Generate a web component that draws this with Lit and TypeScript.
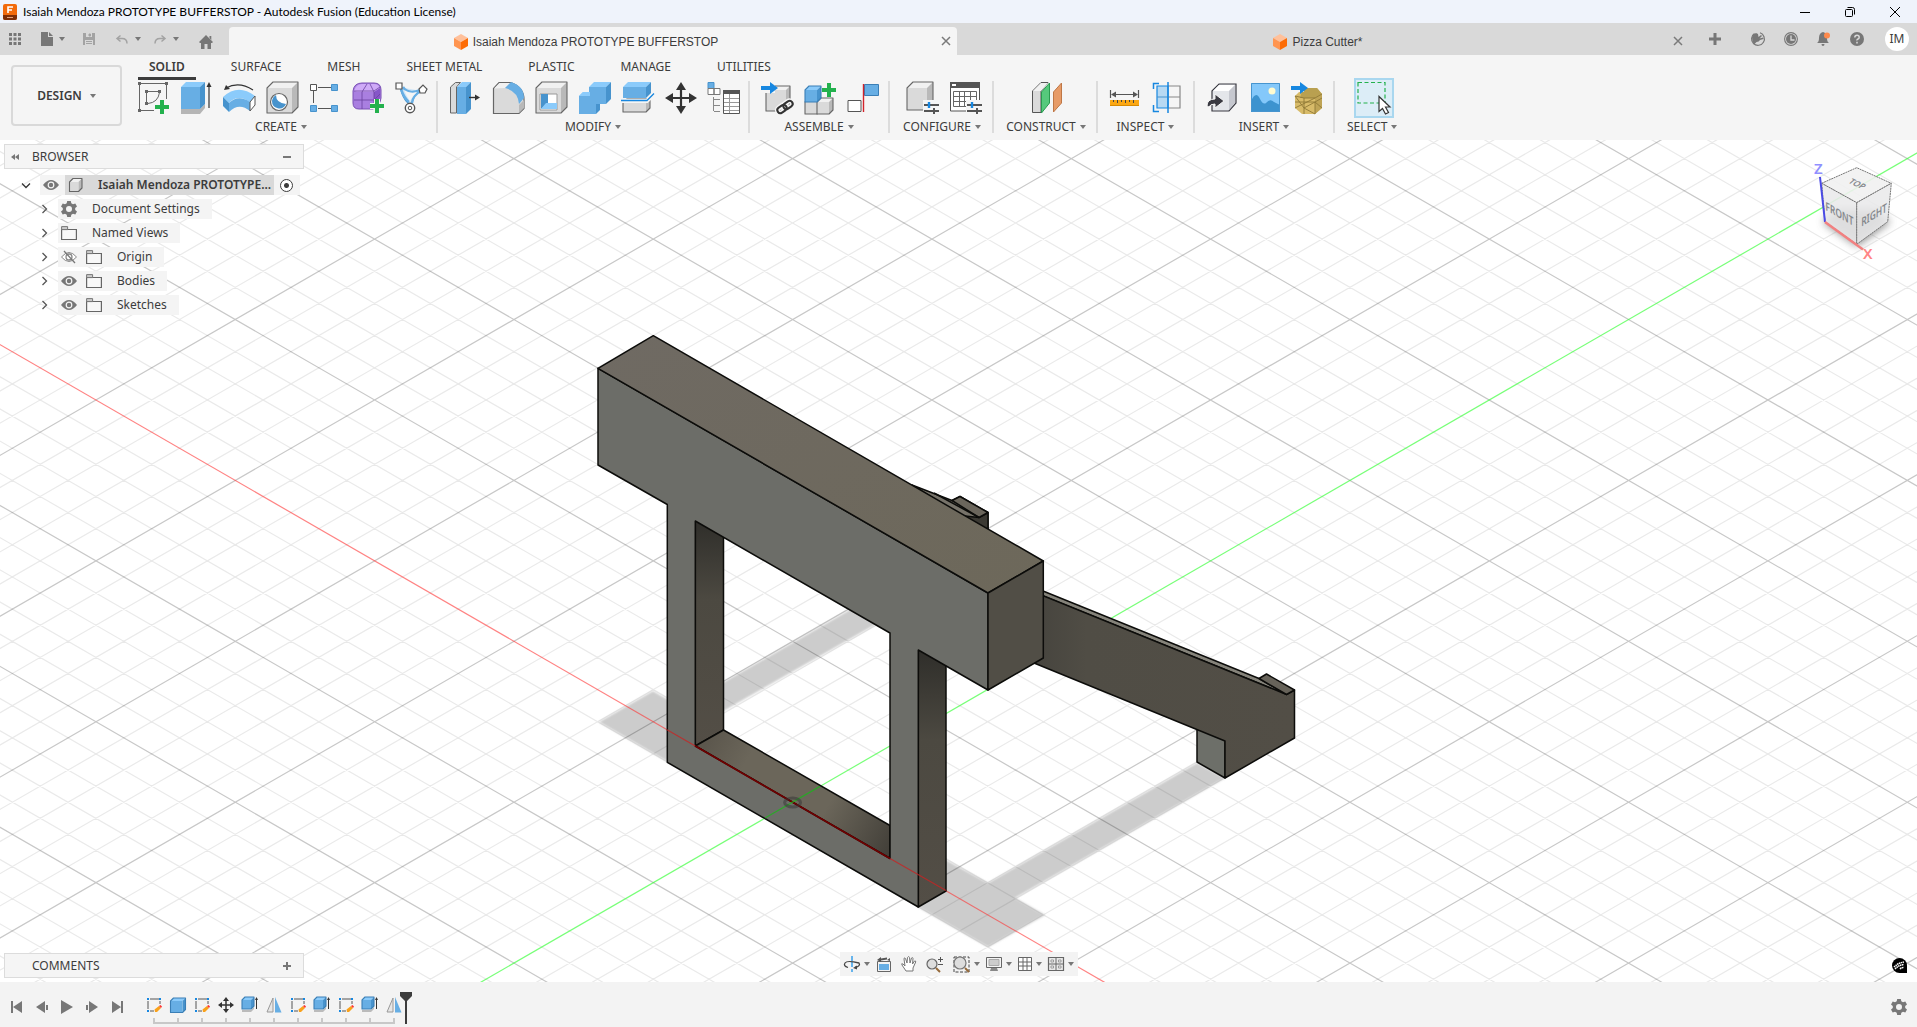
import { LitElement, html, svg, css, nothing } from "lit";
import { customElement, property } from "lit/decorators.js";

type Part = unknown;

/* ---------- shared icon pieces ---------- */

const GREY = ["#dadada", "#f1f1f1", "#b9b9b9", "#666"];
const BLUE = ["#67aee4", "#8bcbfb", "#4793cd", "none"];

/** Oblique box: front face at (x, y) sized w × h, pushed back by d. */
const box = (x: number, y: number, w: number, h: number, d: number, c = GREY): Part => svg`
  <g stroke=${c[3]} stroke-width="1.1" stroke-linejoin="round">
    <path fill=${c[1]} d="M${x} ${y}l${d} ${-d}h${w}l${-d} ${d}z" stroke="none"/>
    <path fill=${c[2]} d="M${x + w} ${y}l${d} ${-d}v${h}l${-d} ${d}z" stroke="none"/>
    <path fill=${c[0]} d="M${x} ${y}h${w}v${h}h${-w}z" stroke="none"/>
    <path fill="none" d="M${x} ${y}l${d} ${-d}h${w}v${h}l${-d} ${d}h${-w}z"/>
  </g>`;

const plus = (x: number, y: number): Part => svg`
  <path d="M${x - 7} ${y}h14M${x} ${y - 7}v14" stroke="#f5f5f5" stroke-width="6"/>
  <path d="M${x - 7} ${y}h14M${x} ${y - 7}v14" stroke="#23b14d" stroke-width="4"/>`;

const arrowRight = (x: number, y: number): Part => svg`
  <path fill="#1787e0" d="M${x} ${y - 2}h9v-4l8 6l-8 6v-4h-9z"/>`;

const sliders = (x: number, y: number): Part => svg`
  <path d="M${x - 1} ${y - 5}h18v15h-18z" fill="#f5f5f5"/>
  <path d="M${x} ${y}h15M${x} ${y + 6}h15" stroke="#555" stroke-width="1.8"/>
  <path d="M${x + 5} ${y - 3}v6" stroke="#1787e0" stroke-width="2.4"/>
  <path d="M${x + 10} ${y + 3}v6" stroke="#555" stroke-width="2"/>`;

const gear = (fill: string): Part => svg`
  <path fill=${fill} fill-rule="evenodd" d="M6.200 0h3.600l.5 2.300 1.700 1 2.300-.8 1.700 3-1.800 1.600v1.800l1.800 1.600-1.700 3-2.300-.8-1.700 1-.5 2.300H6.200l-.5-2.300-1.700-1-2.300.8-1.700-3 1.800-1.600V7.100L0 5.500l1.700-3 2.300.8 1.700-1zM8 5a3 3 0 100 6 3 3 0 000-6z"/>`;

const sketchPencil = svg`
  <path d="M4 2h9M2 4v8M4 14h4M14 4v3" stroke="#555" fill="none"/>
  <path d="M1 1h2v2H1zM13 1h2v2h-2zM1 13h2v2H1z" fill="#1787e0"/>
  <path d="M9 15l-.5-2.500 4.500-3.500 2 2-4 4z" fill="#f9a11b"/><path d="M13 9l1.500-1 1.500 1.500-1 1.500z" fill="#f33"/>`;

const smallExtrude = svg`
  <path d="M1 14h9l3-3v2l-3 3H1z" fill="#bbb"/>
  <g>${box(1, 4, 9, 9, 3, ["#67aee4", "#8bcbfb", "#4793cd", "#3b7fb6"])}</g>
  <path d="M15.500 3v10" stroke="#333"/><path d="M14 4l1.500-3 1.500 3z" fill="#333"/>`;

const ICONS: Record<string, [number, number, Part]> = {
  sketch: [32, 32, svg`
    <path d="M3 1.500h24M1.500 3v24M3 28.500h13M28.500 3v14" stroke="#666" fill="none"/>
    <path d="M0 0h3v3H0zM27 0h3v3h-3zM0 27h3v3H0zM7 8h3v3H7zM20 8h3v3h-3zM7 20h3v3H7z" fill="#666"/>
    <path d="M10 9.500h10M8.500 11v9M10 21.500q10-1 11.500-11" stroke="#666" fill="none"/>${plus(24, 25)}`],
  extrude: [32, 32, svg`
    <path d="M0 27h19l5-5v4l-5 6H0z" fill="#b5b5b5"/>${box(0, 5, 19, 22, 5, BLUE)}
    <path d="M28 4v22" stroke="#333" stroke-width="1.2"/><path d="M25.500 5L28 0l2.500 5z" fill="#333"/>`],
  revolve: [32, 32, svg`
    <path d="M-1 15Q14 1 31 14l-4 7Q14 11 5 21z" fill="#8bcbfb"/>
    <path d="M-1 15l6 6v9l-6-6z" fill="#4793cd"/><path d="M5 21Q14 12 26 20v9Q15 20 5 30z" fill="#67aee4"/>
    <path d="M26 20l5-6v9l-5 6z" fill="#fff" stroke="#555"/>
    <path d="M2 6Q15-1 29 8" stroke="#333" fill="none" stroke-width="1.2"/><path d="M0 8l2-5 4 4z" fill="#333"/>`],
  hole: [32, 32, svg`${box(0, 6, 25, 25, 6)}
    <circle cx="12" cy="20" r="8.5" fill="#fff" stroke="#666" stroke-width="1.2"/>
    <path d="M9 13q0 8 10 9a7.300 7.300 0 01-14-3q.5-4 4-6z" fill="#4793cd"/>`],
  pattern: [32, 32, svg`
    <path d="M8 5.500h13M3.500 9v12M8 26.500h13" stroke="#555"/>
    <path d="M.5 2.500h6v6h-6z" fill="#fff" stroke="#555"/>
    <path d="M21.500 2.500h6v6h-6zM21.500 23.500h6v6h-6zM.5 23.500h6v6h-6z" fill="#67aee4" stroke="#4793cd"/>`],
  form: [32, 32, svg`
    <path d="M0 9Q1 1 9 1h12q7 0 7 7v8q-1 8-8 11H6q-6 0-6-6z" fill="#a97fe0" stroke="#7a50b5"/>
    <path d="M1 9q2-7 8-7h12q5 0 6 5l-6 3H4z" fill="#cfaaf8"/><path d="M21 10l6-4v10l-6 8z" fill="#8656c8"/>
    <path d="M9 27V10l5-8M1 18h20l6-6M21 26V10l-4-8M1 9h20l6-4" stroke="#6b429f" fill="none" stroke-width=".8"/>${plus(24, 24)}`],
  derive: [32, 32, svg`
    <path d="M4 5q3 12 8 16l2 1 2-1q2-9 9-12" stroke="#4793cd" stroke-width="1.2" fill="#cfe6f8"/>
    <path d="M7 5q5 8 17 3M5 7q3 9 8 13M25 9q-8 4-9 12" stroke="#67aee4" stroke-width="2.4" fill="none"/>
    <path d="M8 8q6 4 13 2-5 4-7 9-3-4-6-11z" fill="#f5f5f5"/>
    <path d="M0 1h6v6H0z" fill="#fff" stroke="#555" stroke-width="1.2"/>
    <path d="M23 7l4-4 4 4-2 4h-5z" fill="#fff" stroke="#555" stroke-width="1.2"/>
    <circle cx="14" cy="26" r="4.700" fill="#fff" stroke="#555" stroke-width="1.4"/><circle cx="14" cy="26" r="1.800" fill="#fff" stroke="#555"/>`],
  presspull: [32, 32, svg`
    <path d="M.5 31V5l5-4.500h5L6.500 5v26z" fill="#dadada" stroke="#666"/>
    ${box(7, 5, 9, 27, 5, BLUE)}
    <path d="M19 15.500h7" stroke="#333" stroke-width="1.4"/><path d="M25 12.500l5 3-5 3z" fill="#333"/>`],
  fillet: [32, 32, svg`
    <path d="M.5 31.500V6.500L6 .5h12q13 5 13 17v9l-5 5z" fill="#dadada" stroke="#666" stroke-width="1.2"/>
    <path d="M1 6.500L6.500 1H17l-5 5z" fill="#f1f1f1"/><path d="M26 23l5-5v8l-5 5z" fill="#b9b9b9"/>
    <path d="M12 6l6-6q13 4 13 16l-5 6Q25 9 12 6z" fill="#67aee4"/>`],
  shell: [32, 32, svg`${box(0, 6, 25, 25, 6)}
    <path d="M4 12h17v16H4z" fill="#fff" stroke="#999"/><path d="M5 12h7v9l-7 6z" fill="#4793cd"/><path d="M5 27l5-6h11v6z" fill="#8bcbfb"/>`],
  combine: [32, 32, svg`${box(10, 5, 17, 17, 5, BLUE)}${box(0, 14, 17, 18, 4, BLUE)}
    <path d="M10 10h12v12H10z" fill="#67aee4"/><path d="M0 14l4-4h7v4z" fill="#8bcbfb"/>`],
  split: [32, 32, svg`${box(1, 21, 23, 9, 4)}
    <path d="M0 19h25l7-7" stroke="#f5f5f5" stroke-width="4" fill="none"/>
    ${box(1, 5, 23, 11, 5, BLUE)}<path d="M-1 18.500h26l7-7" stroke="#1787e0" stroke-width="1.3" fill="none"/>`],
  move: [32, 32, svg`
    <path d="M16 4v24M4 16h24" stroke="#333" stroke-width="2.2"/>
    <path d="M11 8l5-8 5 8zM11 24l5 8 5-8zM8 11l-8 5 8 5zM24 11l8 5-8 5z" fill="#333"/>`],
  params: [32, 32, svg`
    <path d="M0 .5h6v6H0z" fill="#67aee4" stroke="#4793cd"/><path d="M0 6.500h6v6H0zM6 6.500h6v6H6z" fill="#fff" stroke="#777"/>
    <path d="M5.500 15v14M6 17.500h6M6 23.500h6M6 29.500h6" stroke="#888" fill="none"/>
    <path d="M15.500 8.500h16v23h-16z" fill="#fff" stroke="#555"/><path d="M15 8h17v4H15z" fill="#555"/>
    <path d="M16 16.500h15M16 20.500h15M16 24.500h15M16 28.500h15M21.500 12v19" stroke="#999"/>`],
  insertLink: [32, 32, svg`${box(4, 8, 20, 21, 4)}
    <path d="M-2 1h15v10H-2z" fill="#f5f5f5"/>${arrowRight(-1, 6)}
    <g fill="none" stroke="#f5f5f5" stroke-width="5"><rect x="15" y="24" width="10" height="6" rx="3" transform="rotate(-35 20 27)"/><rect x="21" y="20" width="10" height="6" rx="3" transform="rotate(-35 26 23)"/></g>
    <g fill="none" stroke="#333" stroke-width="2"><rect x="15" y="24" width="10" height="6" rx="3" transform="rotate(-35 20 27)"/><rect x="21" y="20" width="10" height="6" rx="3" transform="rotate(-35 26 23)"/></g>`],
  newComponent: [32, 32, svg`${box(0, 20, 12, 12, 4)}${box(12, 20, 12, 12, 4)}
    ${box(0, 8, 12, 12, 4, ["#67aee4", "#8bcbfb", "#4793cd", "#3b7fb6"])}${plus(24, 8)}`],
  joint: [32, 32, svg`
    <path d="M0 18.500h13v11H0z" fill="#fff" stroke="#555"/><path d="M16.500 2.500h14v11h-14z" fill="#67aee4" stroke="#3b7fb6"/>
    <path d="M15.500 2v28" stroke="#d2232a" stroke-width="1.4"/>`],
  configure: [32, 32, svg`${box(0, 6, 20, 22, 6)}${sliders(17, 23)}`],
  configTable: [32, 32, svg`
    <path d="M.5 1h29v28H.5z" fill="#fff" stroke="#555"/><path d="M0 0h30v6H0z" fill="#555"/><path d="M2 2h4v2H2z" fill="#fff"/>
    <path d="M3.500 9.500h23v15h-23zM4 14.500h22M4 19.500h22M9.500 10v14M14.500 10v14M20.500 10v14" stroke="#666" fill="none"/>${sliders(17, 23)}`],
  planes: [32, 32, svg`
    <path d="M.5 30.500V9L9 .5h7L9 9v21.500z" fill="#dadada" stroke="#555"/><path d="M1 9L9 1h7L9 9z" fill="#f1f1f1"/>
    <path d="M9.500 31V10l8-9v20z" fill="#56c97c" stroke="#2a9a50"/><path d="M21.500 30V10l8-9v20z" fill="#e79b67" stroke="#bf7746"/>`],
  measure: [32, 32, svg`
    <path d="M.5 8v8M28.500 8v8M3 12.500h23" stroke="#555" stroke-width="1.2"/><path d="M1 12.500l5-3v6zM28 12.500l-5-3v6z" fill="#555"/>
    <path d="M0 18h29v6H0z" fill="#fba713"/><path d="M3.500 18v2M7.500 18v3M11.500 18v2M15.500 18v3M19.500 18v2M23.500 18v3" stroke="#444"/><path d="M0 23h29v1H0z" fill="#d88a00"/>`],
  section: [32, 32, svg`
    <path d="M4 4h11v22H4z" fill="#b7d9f3" stroke="#1787e0" stroke-width="1.2"/><path d="M4 15h11" stroke="#4793cd"/>
    <path d="M15 4h12v22H15M15 15h12" stroke="#888" fill="none" stroke-width="1.2"/>
    <path d="M.5 7V1.500H6M.5 23v6.500H6M15 0v31" stroke="#1787e0" fill="none" stroke-width="1.5"/>`],
  insertBox: [32, 32, svg`
    <path d="M5 9l7-7h17v19l-7 8H5z" fill="#e4e6ea" stroke="#3a3a42" stroke-width="1.2"/>
    <path d="M6 9l6-6h16l-6 6z" fill="#fff"/><path d="M22 9l6-6v18l-6 7z" fill="#c6c8cf"/>
    <path d="M0 24q0-7 8-7v-5l9 7-9 7v-4Q3 22 2 25z" fill="#3a3a42" stroke="#f5f5f5"/>`],
  image: [32, 32, svg`
    <path d="M1 1h29v29H1z" fill="#84c8fa"/><path d="M1 19q5-11 9-2 3 6 6 4 4-5 8-1l6 3v7H1z" fill="#3d93cf"/>
    <circle cx="22" cy="9" r="3.5" fill="#fffbd0"/><path d="M1.500 1.500h28v28h-28z" fill="none" stroke="#4795cf"/>`],
  mesh: [32, 32, svg`
    <path d="M2 14l8-8h14l5 6v14l-7 6H9l-7-6z" fill="#d8bb69"/><path d="M10 6h14l5 6-7 4H7z" fill="#b9a050"/><path d="M29 12v14l-7 6V16z" fill="#bfa456"/>
    <path d="M2 14l9 2h11l7-4M2 20h20l7-4M2 26l20-10M11 16v16M2 14l9 12 11-6v12M11 26l11 6M22 20l7 6" stroke="#8e7836" fill="none" stroke-width=".9"/>
    <path d="M-3 1h14v9H-3z" fill="#f5f5f5"/>${arrowRight(-2, 6)}`],
  select: [32, 32, svg`
    <path d="M0 .5h27v20.500H0z" fill="none" stroke="#23b14d" stroke-width="1.2" stroke-dasharray="4 2.5"/>
    <path d="M21 14.500v15l3.500-3 3 5.500 3-1.500-3-5.500h4.500z" fill="#fff" stroke="#333" stroke-width="1.2"/>`],

  logo: [14, 16, svg`
    <path d="M2 0h10q2 0 2 2v12q0 2-2 2H2q-2 0-2-2V2Q0 0 2 0z" fill="#f26a0b"/><path d="M0 11h14v3q0 2-2 2H2q-2 0-2-2z" fill="#7d2d06"/>
    <path d="M5 9V3h5M5 6h4" stroke="#fff" stroke-width="1.6" fill="none"/><path d="M4 13.500h6" stroke="#e3a07c"/>`],
  cube: [14, 16, svg`<path d="M7 0l7 4-7 4-7-4z" fill="#ffc09a"/><path d="M0 4l7 4v8l-7-4z" fill="#ff9550"/><path d="M14 4L7 8v8l7-4z" fill="#fd6c05"/>`],
  min: [10, 10, svg`<path d="M0 5.500h10" stroke="#000"/>`],
  restore: [10, 10, svg`<rect x=".5" y="2.5" width="7" height="7" rx="1" fill="none" stroke="#000"/><path d="M2.500.5h5q2 0 2 2v5" fill="none" stroke="#000"/>`],
  close: [10, 10, svg`<path d="M0 0l10 10M10 0L0 10" stroke="#000"/>`],
  tabClose: [8, 8, svg`<path d="M0 0l8 8M8 0L0 8" stroke="#7a7a7a" stroke-width="1.5"/>`],
  apps: [12, 12, svg`<path d="M0 0h3v3H0zM4.500 0h3v3h-3zM9 0h3v3H9zM0 4.500h3v3H0zM4.500 4.500h3v3h-3zM9 4.500h3v3H9zM0 9h3v3H0zM4.500 9h3v3h-3zM9 9h3v3H9z" fill="#777"/>`],
  file: [12, 14, svg`<path d="M0 0h7v5h5v9H0zM8 0l4 4H8z" fill="#777"/>`],
  save: [12, 12, svg`<path d="M0 0h12v12H0z" fill="#a3a3a3"/><path d="M3 0h6v4H3zM2 7h8v5H2z" fill="#d9d9d9"/><path d="M6 1h1.500v2H6zM3 8.500h6M3 10.500h6" fill="#a3a3a3" stroke="#a3a3a3"/>`],
  undo: [12, 9, svg`<path d="M4.500.5L1 3.500l3.500 3M1 3.500h5q5 0 5 5" fill="none" stroke="#a3a3a3" stroke-width="1.5"/>`],
  redo: [12, 9, svg`<path d="M7.500.5L11 3.500l-3.500 3M11 3.500H6q-5 0-5 5" fill="none" stroke="#a3a3a3" stroke-width="1.5"/>`],
  home: [14, 14, svg`<path d="M7 0l7 7-1 1h-1v6H8.500V9h-3v5H2V8H1L0 7z" fill="#777"/><path d="M10.500 1h1.800v4l-1.800-2z" fill="#777"/>`],
  add: [12, 12, svg`<path d="M6 0v12M0 6h12" stroke="#777" stroke-width="3"/>`],
  ext: [14, 14, svg`<path d="M9 .8A6.400 6.400 0 113.500 1.500" fill="none" stroke="#777" stroke-width="1.2"/>
    <path d="M1 5q1-3 4-4l2 1 .5 3 2.500-2 1 1-2.500 2.500 3.500-1 .5 1.500-3.500 1q-1 2-3.500 2l-2.500 2.500Q1 10 1 5z" fill="#777"/>`],
  clock: [14, 14, svg`<circle cx="7" cy="7" r="6.400" fill="none" stroke="#777" stroke-width="1.1"/><circle cx="7" cy="7" r="5" fill="#777"/><path d="M7 3.500V8h3.500" stroke="#d9d9d9" fill="none" stroke-width="1.3"/>`],
  bell: [14, 14, svg`<path d="M6 0q4 1 4 6 0 4 2 5H0q2-1 2-5 0-5 4-6zM4.500 12h3q0 2-1.500 2t-1.500-2z" fill="#777"/><circle cx="10" cy="3.5" r="3" fill="#ff8a4c"/>`],
  help: [14, 14, svg`<circle cx="7" cy="7" r="7" fill="#777"/><path d="M4.800 5.500q0-2.300 2.200-2.300t2.200 2q0 1.200-1.200 1.800T7 8.500M7 9.700v1.700" stroke="#d9d9d9" stroke-width="1.5" fill="none"/>`],

  collapse: [8, 6, svg`<path d="M4 0v6L0 3zM8 0v6L4 3z" fill="#777"/>`],
  minus: [8, 2, svg`<path d="M0 0h8v2H0z" fill="#777"/>`],
  plusSmall: [8, 8, svg`<path d="M4 0v8M0 4h8" stroke="#777" stroke-width="2"/>`],
  down: [10, 10, svg`<path d="M1 3.500l4 4 4-4" fill="none" stroke="#333" stroke-width="1.3"/>`],
  right: [10, 10, svg`<path d="M3.500 1l4 4-4 4" fill="none" stroke="#555" stroke-width="1.3"/>`],
  eye: [16, 12, svg`<path d="M0 6Q8-4 16 6 8 16 0 6z" fill="#777"/><circle cx="8" cy="6" r="2.8" fill="none" stroke="#f4f4f4" stroke-width="1.2"/>`],
  eyeOff: [16, 12, svg`<path d="M.5 6Q8-3 15.500 6 8 15 .5 6z" fill="#fff" stroke="#888"/><circle cx="8" cy="6" r="3" fill="none" stroke="#888" stroke-width="1.3"/><path d="M3 0l11 12" stroke="#777" stroke-width="1.3"/>`],
  body: [16, 16, svg`${box(1.5, 5, 9, 9.5, 3.5)}`],
  gear: [16, 16, gear("#777")],
  folder: [16, 14, svg`<path d="M.6 3.500h14.800v10H.6z" fill="#f8f8f8" stroke="#666" stroke-width="1.2"/><path d="M.6.6h6v3h-6z" fill="#ccc" stroke="#777"/>`],

  orbit: [16, 16, svg`<path d="M8 0v5M8 6v5M8 13v3" stroke="#67b4ec" stroke-width="2"/><path d="M4 11.500Q-1 10 1 7t14 0q2 3-4 4.500" fill="none" stroke="#444" stroke-width="1.3"/><path d="M9 12l4-2.500v4z" fill="#444"/>`],
  lookAt: [16, 16, svg`<path d="M1.500 5.500h13v10h-13z" fill="#f3f3f3" stroke="#666"/><path d="M3 8h10v6H3z" fill="#67aee4"/><path d="M1 4l4-3v1.500l6-1v2l-6 1V6M11 4l3-2v3" fill="#555"/>`],
  pan: [16, 16, svg`<path d="M5 15L1 9q-1-2 1-1l2 2L3 3q0-2 1.500-.5L6 7 6.500 1.500Q8-.5 8.500 1.500L9 7l1.500-5q1.500-1 1.500.5L11.500 8l2-3q1.500-.5 1.200 1L12 12v3z" fill="#fff" stroke="#777"/>`],
  zoom: [18, 16, svg`<circle cx="6" cy="8" r="5" fill="#ddd" stroke="#666" stroke-width="1.2"/><path d="M10 12l4 4" stroke="#95693a" stroke-width="2"/><path d="M12 3.500h5M14.500 1v5M12 8.500h5" stroke="#555"/>`],
  fit: [17, 17, svg`<path d="M1 1h15v15H1z" fill="none" stroke="#444" stroke-dasharray="3 1.5"/><circle cx="7" cy="7" r="6" fill="#ddd" stroke="#777" stroke-width="1.2"/><path d="M12 12l4 4" stroke="#95693a" stroke-width="2"/>`],
  display: [16, 14, svg`<path d="M.5.5h15v10H.5z" fill="#f3f3f3" stroke="#666"/><path d="M3 2.500h10v6H3z" fill="#ccc" stroke="#aaa"/><path d="M5 11h6l1 3H4z" fill="#888"/>`],
  grid: [14, 14, svg`<path d="M.5.5h13v13H.5zM5 1v12M9 1v12M1 5h12M1 9h12" fill="#fff" stroke="#666"/>`],
  views: [16, 14, svg`<path d="M.5.5h15v13H.5z" fill="#e8e8e8" stroke="#666" stroke-width="1.2"/><path d="M8 0v14M0 7h16" stroke="#666"/><path d="M3 3h2.500v2H3zM10.500 3H13v2h-2.500zM3 9h2.500v2H3zM10.500 9H13v2h-2.500z" fill="#fff" stroke="#999"/>`],

  start: [12, 12, svg`<path d="M0 0h2v12H0zM11 0v12L2 6z" fill="#777"/>`],
  back: [12, 12, svg`<path d="M9 0v12L0 6zM10 4h2v5h-2z" fill="#777"/>`],
  play: [12, 14, svg`<path d="M0 0l12 7-12 7z" fill="#777"/>`],
  next: [12, 12, svg`<path d="M3 0v12l9-6zM0 4h2v5H0z" fill="#777"/>`],
  end: [12, 12, svg`<path d="M10 0h2v12h-2zM1 0v12l9-6z" fill="#777"/>`],
  tSketch: [16, 16, sketchPencil],
  tExtrude: [18, 17, smallExtrude],
  tBox: [16, 16, svg`${box(0.5, 4, 12, 11.5, 3, ["#67aee4", "#8bcbfb", "#4793cd", "#3b7fb6"])}`],
  tMove: [16, 16, svg`<path d="M8 2v12M2 8h12" stroke="#333" stroke-width="1.5"/><path d="M5 4l3-4 3 4zM5 12l3 4 3-4zM4 5L0 8l4 3zM12 5l4 3-4 3z" fill="#333"/>`],
  tMirror: [16, 16, svg`<path d="M7 1v14H1z" fill="#e6e6e6" stroke="#999"/><path d="M9 0l6.500 15.500H9z" fill="#67aee4"/>`],
  marker: [12, 32, svg`<path d="M0 0h12v4L7 9v23H5V9L0 4z" fill="#3c3c3c"/>`],
  badge: [15, 15, svg`<path d="M7.500 0A7.500 7.500 0 0115 7.500V15H7.500a7.500 7.500 0 010-15z" fill="#000"/><path d="M2 9q4-4 10-5M3 11q4-4 9-4.500M8 11q2-2 4-1.500" stroke="#fff" stroke-width="1.5" fill="none" stroke-dasharray="1.500 .5"/>`],
};

@customElement("fusion-icon")
class FusionIcon extends LitElement {
  @property() name = "";
  static styles = css`
    :host { display: inline-flex; flex: none; }
    svg { display: block; overflow: visible; }
  `;
  render() {
    const icon = ICONS[this.name];
    if (!icon) return nothing;
    const [w, h, body] = icon;
    return html`<svg width=${w} height=${h} viewBox="0 0 ${w} ${h}" aria-hidden="true">${body}</svg>`;
  }
}

/* ---------- modelling canvas ---------- */

const OX = 792.6, OY = 802.2, SLOPE = 0.57735, STEP = 32.178;

@customElement("fusion-canvas")
class FusionCanvas extends LitElement {
  static styles = css`
    :host { display: block; }
    .scene { display: block; width: 100%; height: 100%; }
    .label { font-family: "Noto Sans", sans-serif; }
  `;

  private gridPath(major: boolean) {
    let d = "";
    for (const s of [SLOPE, -SLOPE]) {
      for (let k = -50; k <= 50; k++) {
        if ((k % 5 === 0) !== major || k === 0) continue;
        const c = OY + k * STEP;
        d += `M-100 ${(c + s * (-100 - OX)).toFixed(1)}L2020 ${(c + s * (2020 - OX)).toFixed(1)}`;
      }
    }
    return d;
  }

  render() {
    return html`<svg class="scene" viewBox="0 140 1917 842" preserveAspectRatio="xMidYMid slice" role="img" aria-label="Buffer stop model">
      <defs>
        <linearGradient id="top" x1="0" y1="0" x2="1" y2="1"><stop offset="0" stop-color="#6f6a63"/><stop offset="1" stop-color="#6d685a"/></linearGradient>
        <linearGradient id="leg" x1="0" y1="0" x2="0" y2="1"><stop offset="0" stop-color="#2f2e2a"/><stop offset=".35" stop-color="#4c4941"/><stop offset="1" stop-color="#534e46"/></linearGradient>
        <linearGradient id="sill" gradientUnits="userSpaceOnUse" x1="709" y1="738" x2="900" y2="848"><stop offset="0" stop-color="#5c574d"/><stop offset=".2" stop-color="#6b665a"/><stop offset=".62" stop-color="#6b665a"/><stop offset="1" stop-color="#3f3c36"/></linearGradient>
        <linearGradient id="arm" x1="0" x2="1" y1="0" y2="0"><stop offset="0" stop-color="#46443e"/><stop offset=".2" stop-color="#504d45"/><stop offset="1" stop-color="#524e46"/></linearGradient>
        <filter id="soft" x="-5%" y="-5%" width="110%" height="110%"><feGaussianBlur stdDeviation="1"/></filter>
        <filter id="cubeShade" x="-30%" y="-30%" width="160%" height="160%"><feGaussianBlur stdDeviation="4"/></filter>
      </defs>
      <rect x="-100" y="40" width="2120" height="1042" fill="#fff"/>
      <g fill="#ccc" filter="url(#soft)">
        <path d="M599 722L653 691L720 730V792z"/>
        <path d="M670 713L900 581L915 602L690 730z"/>
        <path d="M900 835L988 883L1197 763L1225 778L1015 898L1045 915L988 947L918 907z"/>
      </g>
      <path d=${this.gridPath(false)} stroke="#000" stroke-opacity=".085" fill="none" stroke-width="1.2"/>
      <path d=${this.gridPath(true)} stroke="#000" stroke-opacity=".22" fill="none" stroke-width="1.2"/>
      <path d=${`M-100 ${OY + SLOPE * (-100 - OX)}L2020 ${OY + SLOPE * (2020 - OX)}`} stroke="#ff3030" stroke-opacity=".6" stroke-width="1.2"/>
      <path d=${`M-100 ${OY - SLOPE * (-100 - OX)}L2020 ${OY - SLOPE * (2020 - OX)}`} stroke="#30ff30" stroke-opacity=".65" stroke-width="1.2"/>

      <g stroke="#0c0c0a" stroke-width="1.5" stroke-linejoin="round">
        <path d="M912 485L952 500.500L960 496.500L988 512.500V532z" fill="#77736a"/>
        <path d="M979 517.500L988 512.500V532L965 516z" fill="#3b3933"/>
        <path d="M952 500.500L979 517.500L988 512.500L960 496.500z" fill="#6b665c"/>
        <path d="M934 493L979 517.500" fill="none"/>

        <path d="M1197 728V762L1225 778V740z" fill="#6d6f69"/>
        <path d="M1040 590L1043 591L1259 678.500L1286.500 694.500L1043 596z" fill="#85837a"/>
        <path d="M1034 592L1286.500 694.500L1294.500 690V738L1225 778V741L1034 663z" fill="url(#arm)"/>
        <path d="M1259 678.500L1266.500 674L1294.500 690L1286.500 694.500z" fill="#67635a"/>

        <path d="M695.300 520L723.500 530V730L695.300 746z" fill="url(#leg)"/>
        <path d="M918.300 650L946 660V891L918.300 907z" fill="url(#leg)"/>
        <path d="M695.300 746L723.500 730L890 825.500V858.500z" fill="url(#sill)"/>
        <path d="M598 368.300L988 593V690L918.300 650V907L667.300 762.300V504.500L598 465zM695.300 521V746L890 858.500V633z" fill="#6c6d68" fill-rule="evenodd"/>
        <path d="M598 368.300L653.300 335.700L1043.300 561L988 593z" fill="url(#top)"/>
        <path d="M988 593L1043.300 561V658L988 690z" fill="#514e46"/>
      </g>
      <path d="M667 729.800L695.300 746M890 858.500L946 890.500" stroke="#c22" stroke-opacity=".75" stroke-width="1.3"/>
      <path d="M695.300 746L890 858.500" stroke="#700000" stroke-width="1.8"/>
      <path d="M765 818L820 786.400" stroke="#1db31d" stroke-opacity=".8" stroke-width="1.3"/>
      <ellipse cx="792.6" cy="802.5" rx="8" ry="4.5" fill="none" stroke="#333" stroke-opacity=".5" stroke-width="3"/>

      <g>
        <path d="M1823 222L1857 246L1890 222L1876 210L1836 210z" fill="#666" opacity=".75" filter="url(#cubeShade)"/>
        <g stroke="#777" stroke-dasharray="2 .6" fill-opacity=".88">
          <path d="M1821.700 183.300L1856.700 167.700L1891.300 183.300L1856.700 202.700z" fill="#f0f0f0"/>
          <path d="M1821.700 183.300L1856.700 202.700V244.300L1825 221.700z" fill="#e9e9ea"/>
          <path d="M1856.700 202.700L1891.300 183.300L1887.700 221.700L1856.700 244.300z" fill="#e9e9ea"/>
        </g>
        <path d="M1820 177L1825 222" stroke="#4a4ae6" stroke-width="2"/>
        <path d="M1825 222L1863 249.500" stroke="#f28080" stroke-width="2.5"/>
        <g class="label" font-size="12" font-weight="600" fill="#85888d" text-anchor="middle">
          <text transform="matrix(.7 .4 .02 1 1839.500 218)">FRONT</text>
          <text transform="matrix(.7 -.42 -.02 1 1874 219)">RIGHT</text>
          <text transform="matrix(.62 .3 -.55 .5 1855 186)">TOP</text>
        </g>
        <text class="label" x="1814" y="174" font-size="15" font-weight="600" fill="#9090ff">Z</text>
        <text class="label" x="1863" y="259" font-size="15" font-weight="600" fill="#ff8585">X</text>
      </g>
    </svg>`;
  }
}

/* ---------- application shell ---------- */

interface Group { label: string; tools: [string, string][]; kind?: string; on?: boolean; }

const GROUPS: Group[] = [
  { label: "CREATE", tools: [["sketch", "Create Sketch"], ["extrude", "Extrude"], ["revolve", "Revolve"], ["hole", "Hole"], ["pattern", "Pattern"], ["form", "Create Form"], ["derive", "Derive"]] },
  { label: "MODIFY", tools: [["presspull", "Press Pull"], ["fillet", "Fillet"], ["shell", "Shell"], ["combine", "Combine"], ["split", "Split Body"], ["move", "Move"], ["params", "Parameters"]] },
  { label: "ASSEMBLE", tools: [["insertLink", "Insert Component"], ["newComponent", "New Component"], ["joint", "Joint"]] },
  { label: "CONFIGURE", tools: [["configure", "Configure"], ["configTable", "Configuration Table"]], kind: "broad" },
  { label: "CONSTRUCT", tools: [["planes", "Offset Plane"]], kind: "broad" },
  { label: "INSPECT", tools: [["measure", "Measure"], ["section", "Section Analysis"]] },
  { label: "INSERT", tools: [["insertBox", "Derive"], ["image", "Canvas"], ["mesh", "Insert Mesh"]] },
  { label: "SELECT", tools: [["select", "Select"]], on: true },
];

const RIBBON_TABS = ["SOLID", "SURFACE", "MESH", "SHEET METAL", "PLASTIC", "MANAGE", "UTILITIES"];

const TREE: [string[], string][] = [
  [["gear"], "Document Settings"],
  [["folder"], "Named Views"],
  [["eyeOff", "folder"], "Origin"],
  [["eye", "folder"], "Bodies"],
  [["eye", "folder"], "Sketches"],
];

const NAV: [string, string, boolean][] = [
  ["orbit", "Orbit", true], ["lookAt", "Look At", false], ["pan", "Pan", false], ["zoom", "Zoom", false],
  ["fit", "Fit", true], ["display", "Display Settings", true], ["grid", "Grid and Snaps", true], ["views", "Viewports", true],
];

const HISTORY = ["tSketch", "tBox", "tSketch", "tMove", "tExtrude", "tMirror", "tSketch", "tExtrude", "tSketch", "tExtrude", "tMirror"];

@customElement("app-root")
class AppRoot extends LitElement {
  static styles = css`
    :host { display: flex; flex-direction: column; height: 100vh; overflow: hidden; background: #f5f5f5;
      color: #3c3c3c; font-family: "Noto Sans", sans-serif; font-size: 12px; line-height: 16px; }
    * { box-sizing: border-box; }
    button { font: inherit; color: inherit; background: none; border: 0; padding: 0; margin: 0;
      display: inline-flex; align-items: center; justify-content: center; white-space: nowrap; }
    .caret { width: 0; height: 0; border: 3px solid transparent; border-top: 4px solid #777; border-bottom: 0; flex: none; }

    .titlebar { display: flex; align-items: center; height: 23px; flex: none; background: #eff3fb; color: #000; padding-left: 3px; }
    .title { margin: 0 0 0 6px; font-size: 12px; font-weight: 400; font-family: Lato, sans-serif; flex: 1; }
    .win { width: 45px; height: 20px; }

    .docbar { display: flex; height: 32px; flex: none; background: #d9d9d9; }
    .quick { display: flex; align-items: center; width: 229px; padding: 0 0 0 9px; flex: none; }
    .quick .apps { margin-right: 20px; }
    .quick .menu { gap: 6px; }
    .quick .save { margin: 0 21px 0 18px; }
    .quick .undo { margin-right: 13px; }
    .quick .menu.wide { gap: 7px; }
    .quick .home { margin-left: 20px; padding-top: 6px; }
    .tabs { display: flex; flex: 1; gap: 4px; padding-top: 4px; min-width: 0; }
    .tab { display: flex; flex: 1; border-radius: 4px 4px 0 0; min-width: 0; }
    .tab.on { background: #f5f5f5; }
    .tab .name { flex: 1; gap: 5px; padding: 1px 0 0 8px; font-family: "Liberation Sans", sans-serif; }
    .tab .x { width: 22px; }
    .account { display: flex; align-items: center; width: 228px; padding: 0 8px 0 20px; flex: none; }
    .account .add { margin-right: 30px; }
    .account .acts { display: flex; gap: 19px; flex: 1; }
    .avatar { width: 24px; height: 24px; border-radius: 50%; background: #fff; }

    .ribbon { display: flex; height: 85px; flex: none; background: #f5f5f5; }
    .design { width: 111px; height: 61px; margin: 10px 0 0 11px; border: 2px solid #d9d9d9; border-radius: 4px; gap: 8px; font-weight: 600; flex: none; }
    .panel { display: flex; flex-direction: column; padding-left: 4px; }
    .rtabs { display: flex; gap: 24px; padding-left: 12px; height: 25px; }
    .rtab { padding: 2px 11px 0; border-bottom: 3px solid transparent; }
    .rtab.on { border-color: #3c3c3c; font-weight: 600; }
    .groups { display: flex; }
    .group { display: flex; flex-direction: column; align-items: center; margin-top: 1px; height: 52px; padding: 0 8px 0 12px; }
    .group + .group { border-left: 2px solid #dcdcdc; }
    .group.broad { min-width: 104px; padding-right: 6px; }
    .tools { display: flex; gap: 11px; height: 32px; margin-top: 1px; align-items: center; flex: none; }
    .tool { width: 32px; height: 32px; flex: none; }
    .tool.on { width: 40px; height: 40px; background: #dcedf7; border: 2px solid #a9d7ef; }
    .glabel { gap: 4px; margin: 4px 4px 0 0; height: 18px; flex: none; }

    .stage { position: relative; flex: 1; min-height: 0; overflow: hidden; background: #fff; }
    .stage fusion-canvas { position: absolute; inset: 0; }
    .browser { position: absolute; left: 4px; top: 4px; width: 300px; }
    .bar { display: flex; align-items: center; height: 25px; background: #f5f5f5; border: 1px solid #dcdcdc; padding: 1px 12px 0 6px; margin: 0; }
    .bar .cap { flex: 1; margin: 0 0 0 13px; font-size: 12px; font-weight: 400; }
    .tree { list-style: none; margin: 0; padding: 4px 0 0; }
    .row { display: flex; align-items: center; height: 24px; padding-left: 35px; }
    .row.root { padding-left: 17px; padding-right: 4px; }
    .fill { display: flex; align-items: center; height: 20px; background: #f4f4f4; margin-left: 9px; padding: 0 12px 0 3px; gap: 9px; }
    .fill .nm { margin-left: 6px; }
    .root .fill { flex: 1; padding: 0 7px 0 3px; gap: 6px; min-width: 0; }
    .root .pick { display: flex; align-items: center; flex: 1; background: #d9d9d9; height: 20px; padding-left: 3px; font-weight: 600; gap: 5px; min-width: 0; }
    .root .pick .nm { white-space: nowrap; margin: 0 0 0 9px; }
    .active { appearance: none; width: 13px; height: 13px; margin: 0; border: 1px solid #3c3c3c; border-radius: 50%; background: radial-gradient(circle, #3c3c3c 0 2px, #fff 3px); flex: none; }
    .comments { position: absolute; left: 4px; bottom: 4px; width: 300px; padding-left: 14px; }
    .nav { position: absolute; bottom: 6px; left: 50%; transform: translateX(-50%); display: flex; align-items: center; height: 24px; background: #f3f3f3; padding: 0 4px; gap: 6px; }
    .nav button { gap: 4px; }
    .nav .plain { margin-right: 3px; }
    .badge { position: absolute; right: 10px; bottom: 9px; }

    .timeline { display: flex; align-items: center; height: 45px; flex: none; background: #f3f3f3; padding: 0 10px 0 11px; }
    .play { display: flex; gap: 13px; margin: 4px 23px 0 0; }
    .history { display: flex; align-items: flex-start; height: 32px; padding-top: 4px; margin: 6px 0 0 -4px; }
    .ev { width: 24px; height: 28px; display: flex; flex-direction: column; justify-content: space-between; }
    .ev button { height: 18px; }
    .tick { height: 6px; border-bottom: 2px solid #c8c8c8; background: linear-gradient(#c8c8c8, #c8c8c8) center / 2px 100% no-repeat; }
    .ev:first-child .tick { margin-left: 11px; background-position: left; }
    .ev:last-of-type .tick { margin-right: 11px; background-position: right; }
    .marker { margin: 6px 0 0 -6px; }
    .set { margin: 4px 0 0 auto; }
  `;

  render() {
    return html`
      <header class="titlebar">
        <fusion-icon name="logo"></fusion-icon>
        <h1 class="title">Isaiah Mendoza PROTOTYPE BUFFERSTOP - Autodesk Fusion (Education License)</h1>
        <button class="win" aria-label="Minimize"><fusion-icon name="min"></fusion-icon></button>
        <button class="win" aria-label="Restore"><fusion-icon name="restore"></fusion-icon></button>
        <button class="win" aria-label="Close"><fusion-icon name="close"></fusion-icon></button>
      </header>

      <div class="docbar">
        <div class="quick">
          <button class="apps" aria-label="Data panel"><fusion-icon name="apps"></fusion-icon></button>
          <button class="menu" aria-label="File"><fusion-icon name="file"></fusion-icon><span class="caret"></span></button>
          <button class="save" aria-label="Save"><fusion-icon name="save"></fusion-icon></button>
          <button class="menu wide undo" aria-label="Undo"><fusion-icon name="undo"></fusion-icon><span class="caret"></span></button>
          <button class="menu wide" aria-label="Redo"><fusion-icon name="redo"></fusion-icon><span class="caret"></span></button>
          <button class="home" aria-label="Home"><fusion-icon name="home"></fusion-icon></button>
        </div>
        <div class="tabs">
          ${["Isaiah Mendoza PROTOTYPE BUFFERSTOP", "Pizza Cutter*"].map((t, i) => html`
            <div class="tab ${i === 0 ? "on" : ""}">
              <button class="name"><fusion-icon name="cube"></fusion-icon>${t}</button>
              <button class="x" aria-label="Close tab"><fusion-icon name="tabClose"></fusion-icon></button>
            </div>`)}
        </div>
        <div class="account">
          <button class="add" aria-label="New design"><fusion-icon name="add"></fusion-icon></button>
          <div class="acts">
            <button aria-label="Extensions"><fusion-icon name="ext"></fusion-icon></button>
            <button aria-label="Job status"><fusion-icon name="clock"></fusion-icon></button>
            <button aria-label="Notifications"><fusion-icon name="bell"></fusion-icon></button>
            <button aria-label="Help"><fusion-icon name="help"></fusion-icon></button>
          </div>
          <button class="avatar">IM</button>
        </div>
      </div>

      <div class="ribbon">
        <button class="design">DESIGN<span class="caret"></span></button>
        <div class="panel">
          <nav class="rtabs">${RIBBON_TABS.map((t, i) => html`<button class="rtab ${i === 0 ? "on" : ""}">${t}</button>`)}</nav>
          <div class="groups">
            ${GROUPS.map((g) => html`<section class="group ${g.kind ?? ""}">
              <div class="tools">${g.tools.map(([n, l]) => html`<button class="tool ${g.on ? "on" : ""}" aria-label=${l}><fusion-icon name=${n}></fusion-icon></button>`)}</div>
              <button class="glabel">${g.label}<span class="caret"></span></button>
            </section>`)}
          </div>
        </div>
      </div>

      <main class="stage">
        <fusion-canvas></fusion-canvas>
        <aside class="browser">
          <div class="bar">
            <button aria-label="Collapse"><fusion-icon name="collapse"></fusion-icon></button>
            <h2 class="cap">BROWSER</h2>
            <button aria-label="Minimize browser"><fusion-icon name="minus"></fusion-icon></button>
          </div>
          <ul class="tree">
            <li class="row root">
              <button aria-label="Collapse node"><fusion-icon name="down"></fusion-icon></button>
              <div class="fill">
                <fusion-icon name="eye"></fusion-icon>
                <div class="pick"><fusion-icon name="body"></fusion-icon><span class="nm">Isaiah Mendoza PROTOTYPE...</span></div>
                <input class="active" type="radio" checked aria-label="Activate component" />
              </div>
            </li>
            ${TREE.map(([icons, name]) => html`<li class="row">
              <button aria-label="Expand node"><fusion-icon name="right"></fusion-icon></button>
              <div class="fill">${icons.map((n) => html`<fusion-icon name=${n}></fusion-icon>`)}<span class="nm">${name}</span></div>
            </li>`)}
          </ul>
        </aside>
        <div class="bar comments">
          <h2 class="cap">COMMENTS</h2>
          <button aria-label="Add comment"><fusion-icon name="plusSmall"></fusion-icon></button>
        </div>
        <div class="nav">
          ${NAV.map(([n, l, menu]) => html`<button class=${menu ? "more" : "plain"} aria-label=${l}><fusion-icon name=${n}></fusion-icon>${menu ? html`<span class="caret"></span>` : nothing}</button>`)}
        </div>
        <button class="badge" aria-label="Assistant"><fusion-icon name="badge"></fusion-icon></button>
      </main>

      <footer class="timeline">
        <div class="play">
          ${[["start", "Go to start"], ["back", "Step back"], ["play", "Play"], ["next", "Step forward"], ["end", "Go to end"]].map(([n, l]) => html`<button aria-label=${l}><fusion-icon name=${n}></fusion-icon></button>`)}
        </div>
        <div class="history">
          ${HISTORY.map((n) => html`<div class="ev"><button aria-label="Feature"><fusion-icon name=${n}></fusion-icon></button><span class="tick"></span></div>`)}
        </div>
        <fusion-icon class="marker" name="marker"></fusion-icon>
        <button class="set" aria-label="Timeline settings"><fusion-icon name="gear"></fusion-icon></button>
      </footer>
    `;
  }
}
